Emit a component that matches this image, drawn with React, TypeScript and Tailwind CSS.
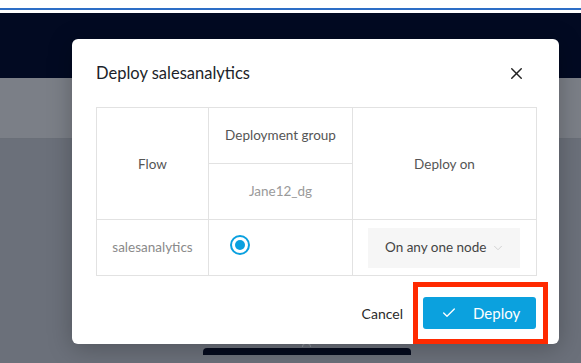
import { Check, ChevronDown, X } from "lucide-react";

const font = { fontFamily: "Lato, 'Noto Sans', sans-serif" };

function Radio() {
  return (
    <span className="flex h-[20px] w-[20px] items-center justify-center rounded-full border-[2.5px] border-[#0aa0df]">
      <span className="h-[10px] w-[10px] rounded-full bg-[#0aa0df]" />
    </span>
  );
}

export default function App() {
  return (
    <div className="relative h-[363px] w-[581px] overflow-hidden bg-[#6b707a]" style={font}>
      {/* page behind the dialog (dimmed) */}
      <div className="h-[8px] bg-white" />
      <div className="h-[2px] bg-[#2d6ec6]" />
      <div className="h-[3px] bg-white" />
      <div className="h-[65px] bg-[#020a22]" />
      <div className="h-[61px] border-b border-[#6a6f78] bg-[#7b7f87]" />
      <div className="flex h-[216px] flex-col items-center justify-end">
        <div className="ml-[32px] h-[8px] w-px bg-[#8b9099]" />
        <div className="ml-[32px] h-[4px] w-[9px] rounded-t-full border border-b-0 border-[#8b9099]" />
        <div className="ml-[32px] mt-[1px] h-[7px] w-[208px] rounded-t-[4px] bg-[#050b1e]" />
      </div>

      {/* dialog */}
      <div className="absolute left-[72px] top-[39px] h-[305px] w-[487px] rounded-[6px] bg-white pl-[24px] pr-[23px] pt-[22px] shadow-[0_4px_24px_rgba(0,0,0,0.25)]">
        <div className="flex h-[24px] items-center justify-between">
          <h2 className="text-[16.5px] text-[#1c1f2a]">Deploy salesanalytics</h2>
          <X className="mr-[10px] h-[19px] w-[19px] text-[#222]" strokeWidth={1.8} />
        </div>

        <table className="mt-[22px] w-[440px] table-fixed border-collapse text-center text-[13.5px]">
          <colgroup>
            <col className="w-[112px]" />
            <col className="w-[144px]" />
            <col className="w-[184px]" />
          </colgroup>
          <tbody>
            <tr className="h-[56px]">
              <td rowSpan={2} className="border border-[#e2e2e2] pt-[2px] text-[#555]">Flow</td>
              <td className="border border-[#e2e2e2] text-[#555]">Deployment group</td>
              <td rowSpan={2} className="border border-[#e2e2e2] pt-[2px] text-[#555]">Deploy on</td>
            </tr>
            <tr className="h-[56px]">
              <td className="border border-[#e2e2e2] text-[#9a9a9a]">Jane12_dg</td>
            </tr>
            <tr className="h-[56px]">
              <td className="border border-[#e2e2e2] text-[#8a8a8a]">salesanalytics</td>
              <td className="border border-[#e2e2e2] px-[21px]">
                <div className="-mt-[6px] flex">
                  <Radio />
                </div>
              </td>
              <td className="border border-[#e2e2e2] pl-[15px] pr-[16px]">
                <div className="flex h-[40px] items-center justify-between bg-[#f6f6f6] pl-[17px] pr-[15px] text-[#444]">
                  <span>On any one node</span>
                  <ChevronDown className="h-[14px] w-[14px] text-[#cdcdcd]" strokeWidth={1.5} />
                </div>
              </td>
            </tr>
          </tbody>
        </table>

        <div className="mt-[21px] flex items-center justify-end gap-[20px]">
          <button className="text-[14px] text-[#2a2a2a]">Cancel</button>
          <button className="flex h-[32px] w-[113px] items-center rounded-[3px] bg-[#0ba1de] pl-[18px] text-[15px] text-white">
            <Check className="h-[16px] w-[16px]" strokeWidth={2} />
            <span className="ml-[16px]">Deploy</span>
          </button>
        </div>

        {/* highlight annotation */}
        <div className="pointer-events-none absolute left-[341px] top-[243px] h-[62px] w-[135px] border-[5px] border-[#ff2a00]" />
      </div>
    </div>
  );
}
